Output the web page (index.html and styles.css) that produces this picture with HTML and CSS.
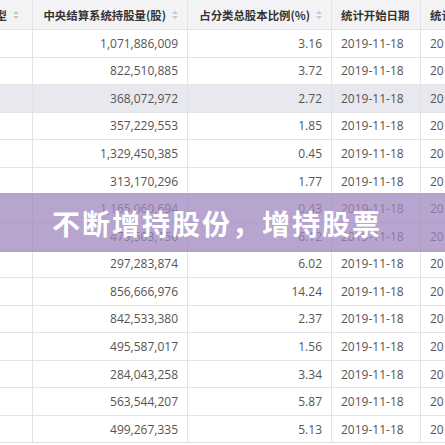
FILE: index.html
```html
<!DOCTYPE html>
<html lang="zh-CN">
<head>
<meta charset="utf-8">
<title>中央结算系统持股</title>
<link rel="stylesheet" href="styles.css">
</head>
<body>
<div class="viewport">
  <div class="grid">
    <div class="row head">
      <div class="cell c1 right">类型<span class="sort"></span></div>
      <div class="cell c2 right">中央结算系统持股量(股)<span class="sort"></span></div>
      <div class="cell c3 right">占分类总股本比例(%)<span class="sort"></span></div>
      <div class="cell c4">统计开始日期</div>
      <div class="cell c5">统计结束日期</div>
    </div>
    <div class="row"><div class="cell"></div><div class="cell right">1,071,886,009</div><div class="cell right">3.16</div><div class="cell">2019-11-18</div><div class="cell">2019-11-18</div></div>
    <div class="row"><div class="cell"></div><div class="cell right">822,510,885</div><div class="cell right">3.72</div><div class="cell">2019-11-18</div><div class="cell">2019-11-18</div></div>
    <div class="row hl"><div class="cell"></div><div class="cell right">368,072,972</div><div class="cell right">2.72</div><div class="cell">2019-11-18</div><div class="cell">2019-11-18</div></div>
    <div class="row"><div class="cell"></div><div class="cell right">357,229,553</div><div class="cell right">1.85</div><div class="cell">2019-11-18</div><div class="cell">2019-11-18</div></div>
    <div class="row"><div class="cell"></div><div class="cell right">1,329,450,385</div><div class="cell right">0.45</div><div class="cell">2019-11-18</div><div class="cell">2019-11-18</div></div>
    <div class="row"><div class="cell"></div><div class="cell right">313,170,296</div><div class="cell right">1.77</div><div class="cell">2019-11-18</div><div class="cell">2019-11-18</div></div>
    <div class="row"><div class="cell"></div><div class="cell right">1,165,060,694</div><div class="cell right">0.43</div><div class="cell">2019-11-18</div><div class="cell">2019-11-18</div></div>
    <div class="row"><div class="cell"></div><div class="cell right">479,503,156</div><div class="cell right">6.12</div><div class="cell">2019-11-18</div><div class="cell">2019-11-18</div></div>
    <div class="row"><div class="cell"></div><div class="cell right">297,283,874</div><div class="cell right">6.02</div><div class="cell">2019-11-18</div><div class="cell">2019-11-18</div></div>
    <div class="row"><div class="cell"></div><div class="cell right">856,666,976</div><div class="cell right">14.24</div><div class="cell">2019-11-18</div><div class="cell">2019-11-18</div></div>
    <div class="row"><div class="cell"></div><div class="cell right">842,533,380</div><div class="cell right">2.37</div><div class="cell">2019-11-18</div><div class="cell">2019-11-18</div></div>
    <div class="row"><div class="cell"></div><div class="cell right">495,587,017</div><div class="cell right">1.56</div><div class="cell">2019-11-18</div><div class="cell">2019-11-18</div></div>
    <div class="row"><div class="cell"></div><div class="cell right">284,043,258</div><div class="cell right">3.34</div><div class="cell">2019-11-18</div><div class="cell">2019-11-18</div></div>
    <div class="row"><div class="cell"></div><div class="cell right">563,544,207</div><div class="cell right">5.87</div><div class="cell">2019-11-18</div><div class="cell">2019-11-18</div></div>
    <div class="row"><div class="cell"></div><div class="cell right">499,267,335</div><div class="cell right">5.13</div><div class="cell">2019-11-18</div><div class="cell">2019-11-18</div></div>
  </div>
  <div class="banner">不断增持股份，增持股票</div>
</div>
</body>
</html>
```

FILE: styles.css
```css
html, body {
  margin: 0;
  padding: 0;
  background: #ffffff;
}

.viewport {
  position: relative;
  width: 445px;
  height: 445px;
  overflow: hidden;
  font-family: "Open Sans", "Noto Sans CJK SC", sans-serif;
  font-size: 12px;
  color: #555555;
}

.grid {
  margin-left: -67px;
  width: 700px;
}

.row {
  display: grid;
  grid-template-columns: 100px 155px 144px 89px 212px;
  height: 27.57px;
  background: #ffffff;
}

.row.head {
  height: 30px;
  background: #f3f3f5;
  font-family: "Noto Sans CJK SC", sans-serif;
  font-weight: 700;
  font-size: 11.4px;
  color: #333333;
}

.row.hl {
  background: #e8e9ee;
}

.cell {
  box-sizing: border-box;
  display: flex;
  align-items: center;
  padding: 0 9px;
  border-right: 1px solid #e3e3e6;
  border-bottom: 1px solid #e3e3e6;
  white-space: nowrap;
  overflow: hidden;
}

.cell.right {
  justify-content: flex-end;
}

.head .c1 {
  padding-right: 13px;
}

.sort {
  display: inline-flex;
  flex-direction: column;
  justify-content: center;
  gap: 2px;
  margin-left: 6px;
  width: 6px;
  height: 10px;
  position: relative;
}

.sort::before,
.sort::after {
  content: "";
  display: block;
  width: 0;
  height: 0;
  border-left: 3px solid transparent;
  border-right: 3px solid transparent;
}

.sort::before {
  border-bottom: 3px solid #c8c8cc;
}

.sort::after {
  border-top: 3px solid #c8c8cc;
}

.banner {
  position: absolute;
  left: 0;
  top: 193px;
  width: 100%;
  height: 59px;
  box-sizing: border-box;
  padding-left: 52px;
  display: flex;
  align-items: center;
  background: rgba(158, 133, 190, 0.74);
  color: #ffffff;
  font-family: "Noto Sans CJK SC", sans-serif;
  font-weight: 700;
  font-size: 28px;
  letter-spacing: 2px;
}
```
